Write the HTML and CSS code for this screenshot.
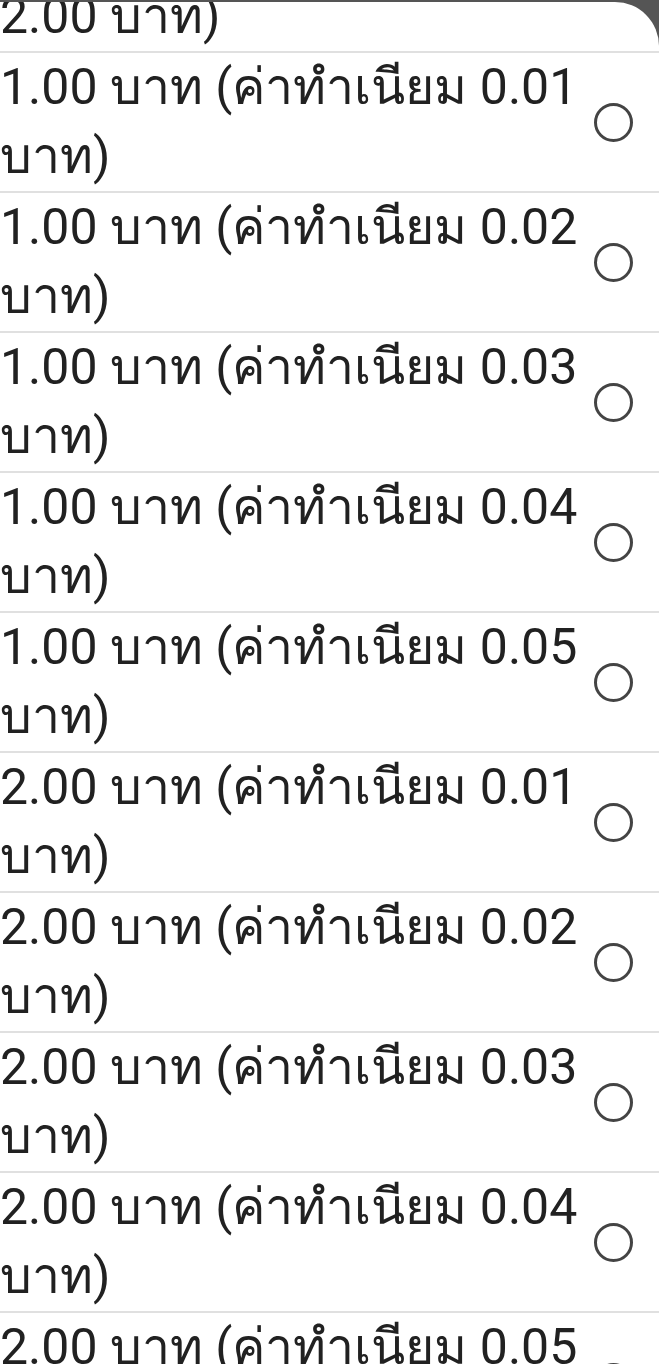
FILE: index.html
```html
<!DOCTYPE html>
<html lang="th">
<head>
    <meta charset="UTF-8">
    <meta name="viewport" content="width=device-width, initial-scale=1.0">
    <title>เลือกจำนวนเงิน</title>
    <link rel="stylesheet" href="styles.css">
</head>
<body>
    <main class="sheet">
        <ul class="options">
            <li class="option option-cut">
                <span class="option-text">2.00 บาท)</span>
            </li>
            <li class="option">
                <span class="option-text">1.00 บาท (ค่าทำเนียม 0.01 บาท)</span>
                <span class="radio"></span>
            </li>
            <li class="option">
                <span class="option-text">1.00 บาท (ค่าทำเนียม 0.02 บาท)</span>
                <span class="radio"></span>
            </li>
            <li class="option">
                <span class="option-text">1.00 บาท (ค่าทำเนียม 0.03 บาท)</span>
                <span class="radio"></span>
            </li>
            <li class="option">
                <span class="option-text">1.00 บาท (ค่าทำเนียม 0.04 บาท)</span>
                <span class="radio"></span>
            </li>
            <li class="option">
                <span class="option-text">1.00 บาท (ค่าทำเนียม 0.05 บาท)</span>
                <span class="radio"></span>
            </li>
            <li class="option">
                <span class="option-text">2.00 บาท (ค่าทำเนียม 0.01 บาท)</span>
                <span class="radio"></span>
            </li>
            <li class="option">
                <span class="option-text">2.00 บาท (ค่าทำเนียม 0.02 บาท)</span>
                <span class="radio"></span>
            </li>
            <li class="option">
                <span class="option-text">2.00 บาท (ค่าทำเนียม 0.03 บาท)</span>
                <span class="radio"></span>
            </li>
            <li class="option">
                <span class="option-text">2.00 บาท (ค่าทำเนียม 0.04 บาท)</span>
                <span class="radio"></span>
            </li>
            <li class="option">
                <span class="option-text">2.00 บาท (ค่าทำเนียม 0.05 บาท)</span>
                <span class="radio"></span>
            </li>
        </ul>
    </main>
</body>
</html>
```

FILE: styles.css
```css
* {
    padding: 0px;
    margin: 0px;
    box-sizing: border-box;
}
:root {
    --shade: #555555;
    --text: #212121;
    --line: #e0e0e0;
    --radio: #444444;
}
html, body {
    height: 100%;
    overflow: hidden;
}
body {
    background-color: var(--shade);
    font-family: Roboto, "Noto Sans", "Liberation Sans", sans-serif;
    color: var(--text);
    padding-top: 2px;
}
.sheet {
    height: 100%;
    background-color: #ffffff;
    border-top-right-radius: 44px;
    overflow: hidden;
}
.options {
    list-style: none;
    margin-top: -20px;
}
.option {
    display: flex;
    align-items: center;
    border-bottom: 2px solid var(--line);
    font-size: 50px;
    line-height: 69px;
}
.option-text {
    width: 586px;
}
.radio {
    width: 39px;
    height: 39px;
    border: 3px solid var(--radio);
    border-radius: 50%;
    margin-left: 8px;
    flex-shrink: 0;
}
```
